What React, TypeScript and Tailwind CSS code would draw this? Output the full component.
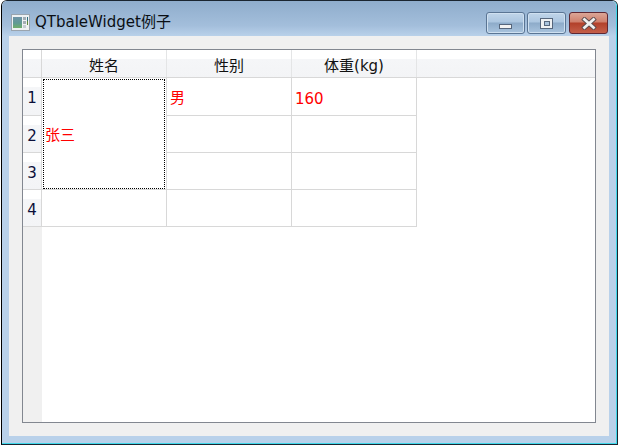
const uiFont = "font-['DejaVu_Sans','Noto_Sans_CJK_SC',sans-serif]";

const rows = ['1', '2', '3', '4'];
const rowHeights = ['h-[38px]', 'h-[37px]', 'h-[37px]', 'h-[37px]'];
const headGradient = 'bg-[linear-gradient(#ffffff_0px,#ffffff_9px,#f5f6f8_9px,#f3f4f6_100%)]';

function WindowButton({ kind }: { kind: 'min' | 'max' | 'close' }) {
  if (kind === 'close') {
    return (
      <div className="ml-px flex h-[22px] w-[39px] items-center justify-center rounded-[3px] border border-[#5e2733] bg-[linear-gradient(#dba697_0%,#cf7f6c_45%,#b2402a_50%,#c45f4a_100%)]">
        <svg width="16" height="13" viewBox="0 0 16 13">
          <path d="M3.5 2.5 L12.5 10.5 M12.5 2.5 L3.5 10.5" stroke="#5a4a4c" strokeWidth="4.6" strokeLinecap="square" />
          <path d="M3.5 2.5 L12.5 10.5 M12.5 2.5 L3.5 10.5" stroke="#f0f0f0" strokeWidth="2.8" strokeLinecap="square" />
        </svg>
      </div>
    );
  }
  return (
    <div className="flex h-[22px] w-[39px] items-center justify-center rounded-[3px] border border-[#5a7594] bg-[linear-gradient(#c0d5ea_0%,#acc6e0_45%,#8dabc9_50%,#a9c4de_100%)] shadow-[inset_0_0_0_1px_#cfe0f0]">
      {kind === 'min' ? (
        <div className="mt-[6px] h-[5px] w-[13px] border border-[#56667c] bg-[#f2f2f2]" />
      ) : (
        <div className="flex h-[11px] w-[13px] items-center justify-center border border-[#56667c] bg-[#eef0f2]">
          <div className="h-[5px] w-[6px] border border-[#56667c] bg-[#a9c3dc]" />
        </div>
      )}
    </div>
  );
}

function AppIcon() {
  return (
    <svg width="19" height="17" viewBox="0 0 19 17" className="mr-[5px]">
      <defs>
        <linearGradient id="pic" x1="0" y1="0" x2="0" y2="1">
          <stop offset="0" stopColor="#6f93a8" />
          <stop offset="0.55" stopColor="#5f9a94" />
          <stop offset="1" stopColor="#6fae6a" />
        </linearGradient>
      </defs>
      <rect x="0.5" y="0.5" width="18" height="16" fill="#eef1f3" stroke="#9aa4ae" />
      <rect x="2" y="3" width="9" height="11" fill="url(#pic)" />
      <rect x="12" y="3" width="3" height="3" fill="#a3adb4" />
      <rect x="12" y="7" width="3" height="3" fill="#a3adb4" />
      <rect x="12" y="11" width="3" height="3" fill="#c6cdd2" />
      <rect x="16" y="3" width="1" height="4" fill="#2f6f80" />
      <rect x="16" y="7" width="1" height="4" fill="#5e8a3a" />
    </svg>
  );
}

export default function App() {
  return (
    <div className={`h-[445px] w-[618px] overflow-hidden bg-white pl-px leading-none ${uiFont}`}>
      <div className="h-full rounded-t-[6px] border-x border-y border-[#1a2530] border-l-black">
        <div className="flex h-full flex-col rounded-t-[5px] border-b border-r border-[#3fd8ea] bg-[#b9d1ea]">
          <div className="flex h-[35px] shrink-0 items-start justify-between rounded-t-[5px] bg-[linear-gradient(#8fadcc,#a3bedb_70%,#b9d1ea)] pl-[9px] pr-[8px]">
            <div className="mt-[13px] flex items-center text-[15px] text-[#0b0f14]">
              <AppIcon />
              <span>QTbaleWidget例子</span>
            </div>
            <div className="mt-[11px] flex gap-[2px]">
              <WindowButton kind="min" />
              <WindowButton kind="max" />
              <WindowButton kind="close" />
            </div>
          </div>
          <div className="mx-[7px] mb-[7px] h-[400px] bg-[#f0f0f0] p-[13px]">
            <div className="flex h-full border border-[#828790] bg-white">
              <div className="flex w-[19px] shrink-0 flex-col bg-[#f0f0f0]">
                <div className={`h-[28px] border-b border-r border-[#d8d8d8] ${headGradient}`} />
                {rows.map((r, i) => (
                  <div
                    key={r}
                    className={`flex ${rowHeights[i]} items-center justify-center border-b border-r border-[#d8d8d8] pt-[4px] ${headGradient} text-[15px] text-[#0b0f3a]`}
                  >
                    {r}
                  </div>
                ))}
              </div>
              <div className="min-w-0 flex-1">
                <div className={`flex h-[28px] border-b border-[#d8d8d8] ${headGradient} text-[15px] text-[#111]`}>
                  <div className="flex w-[125px] items-center justify-center border-r border-[#e4e5e6] pt-[6px]">姓名</div>
                  <div className="flex w-[125px] items-center justify-center border-r border-[#e4e5e6] pt-[6px]">性别</div>
                  <div className="flex w-[125px] items-center justify-center border-r border-[#e4e5e6] pt-[6px]">体重(kg)</div>
                </div>
                <div className="grid w-[375px] grid-cols-[125px_125px_125px] grid-rows-[38px_37px_37px_37px] text-[15px] text-[#ff0000]">
                  <div className="row-span-3 flex items-center border-b border-r border-[#d8d8d8] bg-white pl-px pr-[1px] pt-px">
                    <div className="flex h-full w-full items-center border border-dotted border-black pl-[1px] pt-[3px]">张三</div>
                  </div>
                  <div className="flex items-center border-b border-r border-[#d8d8d8] pl-[3px] pt-[4px]">男</div>
                  <div className="flex items-center border-b border-r border-[#d8d8d8] pl-[3px] pt-[5px]">160</div>
                  <div className="border-b border-r border-[#d8d8d8]" />
                  <div className="border-b border-r border-[#d8d8d8]" />
                  <div className="border-b border-r border-[#d8d8d8]" />
                  <div className="border-b border-r border-[#d8d8d8]" />
                  <div className="border-b border-r border-[#d8d8d8]" />
                  <div className="border-b border-r border-[#d8d8d8]" />
                  <div className="border-b border-r border-[#d8d8d8]" />
                </div>
              </div>
            </div>
          </div>
        </div>
      </div>
    </div>
  );
}
